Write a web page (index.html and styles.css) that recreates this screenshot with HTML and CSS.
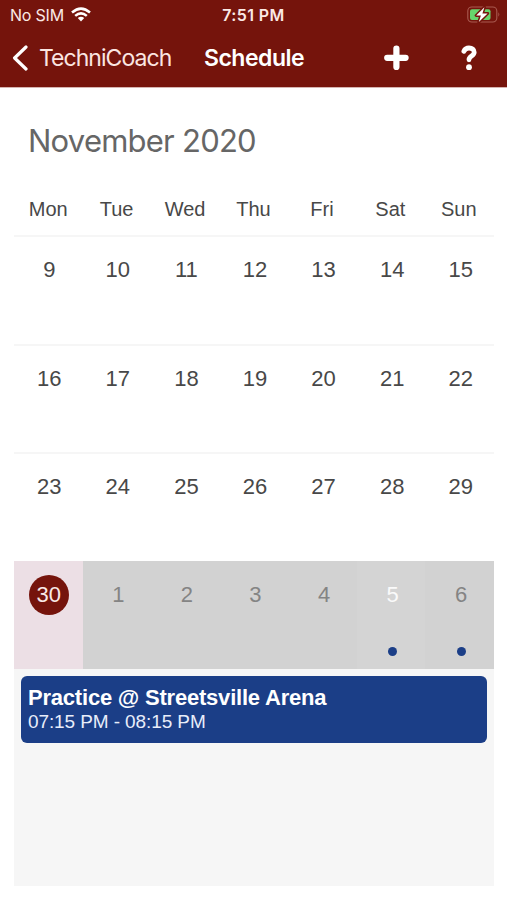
FILE: index.html
```html
<!DOCTYPE html>
<html lang="en">
<head>
<meta charset="utf-8">
<title>Schedule</title>
<link rel="stylesheet" href="styles.css">
</head>
<body>
<header class="header">
  <div class="status">
    <div class="carrier"><span class="sim">No SIM</span>
      <svg class="wifi" width="20" height="15" viewBox="0 0 20 15"><g fill="none" stroke="currentColor" stroke-width="2.5"><path d="M1 5.5Q10-2.3 19 5.5"/><path d="M4.2 8.9Q10 3.8 15.8 8.9"/></g><path fill="currentColor" d="M6.8 11Q10 8.3 13.2 11L10 14.5Z"/></svg>
    </div>
    <time class="clock">7:51 PM</time>
    <svg class="battery" width="33" height="17" viewBox="0 0 33 17"><rect x=".8" y="1" width="29" height="15" rx="4" fill="none" stroke="#a95a50" stroke-width="1.1"/><path d="M31.4 6.3Q33.2 8.5 31.4 10.7Z" fill="#a95a50"/><rect x="3" y="3.2" width="20.5" height="10.8" rx="2" fill="#66d66c"/><path d="M17.4 1.2 9.2 9.5h4.7L11.8 16 20.6 7.4h-5.2Z" fill="#fff" stroke="#75140c" stroke-width="3" stroke-linejoin="round" paint-order="stroke"/></svg>
  </div>
  <nav class="nav">
    <a class="back"><svg width="17" height="26" viewBox="0 0 17 26"><path d="M15 2 3.6 13 15 24" fill="none" stroke="currentColor" stroke-width="3.2" stroke-linecap="round" stroke-linejoin="round"/></svg><span class="back-text">TechniCoach</span></a>
    <h1 class="title">Schedule</h1>
    <svg class="plus" width="26" height="26" viewBox="0 0 26 26"><path d="M13.4 3.6v18.4M4.2 12.8h18.4" fill="none" stroke="currentColor" stroke-width="6.2" stroke-linecap="round"/></svg>
    <svg class="help" width="18" height="26" viewBox="0 0 18 26"><path d="M3.9 6.2C4.8 4.2 6.7 3 9 3c3.2 0 5.2 1.7 5.2 4.3 0 4-5.2 3.6-5.2 7.5" fill="none" stroke="currentColor" stroke-width="4.8" stroke-linecap="round" stroke-linejoin="round"/><circle cx="9" cy="22.2" r="2.9" fill="currentColor"/></svg>
  </nav>
</header>
<main class="calendar">
  <h2 class="month"><span class="month-text">November 2020</span></h2>
  <div class="weekdays"><span>Mon</span><span>Tue</span><span>Wed</span><span>Thu</span><span>Fri</span><span>Sat</span><span>Sun</span></div>
  <div class="week"><span>9</span><span>10</span><span>11</span><span>12</span><span>13</span><span>14</span><span>15</span></div>
  <div class="week"><span>16</span><span>17</span><span>18</span><span>19</span><span>20</span><span>21</span><span>22</span></div>
  <div class="week"><span>23</span><span>24</span><span>25</span><span>26</span><span>27</span><span>28</span><span>29</span></div>
  <div class="week next"><span class="selected"><b class="disc">30</b></span><span>1</span><span>2</span><span>3</span><span>4</span><span class="event today">5</span><span class="event">6</span></div>
  <section class="agenda">
    <article class="card"><h3 class="name"><span>Practice @ Streetsville Arena</span></h3><p class="time"><span>07:15 PM - 08:15 PM</span></p></article>
  </section>
</main>
</body>
</html>
```
FILE: styles.css
```css
* { box-sizing: border-box; }
body { margin: 0; background: #fff; color: #484848; font-family: "Liberation Sans", Arial, sans-serif; }
h1, h2, h3, p { margin: 0; }
svg { display: block; flex: none; }
.header { height: 88px; background: #75140c; color: #fff; font-family: Inter, sans-serif; border-bottom: 1px solid #d6b4b0; }
.status { height: 30px; display: grid; grid-template-columns: 1fr auto 1fr; align-items: center; padding: 0 7px 0 10px; font-size: 16px; color: #fbe9e5; }
.carrier { display: flex; align-items: center; gap: 7px; margin-top: -1px; }
.sim { letter-spacing: -.2px; }
.wifi { color: #fff; }
.clock { font-weight: 600; font-size: 16px; letter-spacing: .4px; margin: -1px 3px 0 0; }
.battery { justify-self: end; margin-top: -2px; }
.nav { height: 56px; display: flex; align-items: center; padding-left: 11px; }
.back { display: flex; align-items: center; gap: 11px; width: 193px; color: #fff; }
.back-text { font-size: 23px; letter-spacing: -.96px; color: #fbe5e1; }
.title { font-size: 23px; font-weight: 600; letter-spacing: -.5px; width: 179px; }
.plus { margin-right: 51px; }
.calendar { padding: 27px 13px 0 14px; }
.month { height: 83.5px; padding: 6px 0 0 14px; font: 400 31px/40px Inter, sans-serif; letter-spacing: -.76px; color: #666; }
.weekdays { height: 36.5px; display: grid; grid-template-columns: repeat(7, 1fr); text-align: center; font-size: 20px; line-height: 1; width: 479px; }
.week { height: 108.6px; display: grid; grid-template-columns: repeat(7, 1fr); border-top: 2px solid #f6f6f6; text-align: center; font-size: 22px; line-height: 66px; }
.week > span { padding-left: 2px; }
.next { border: 0; background: #d2d2d2; color: #848484; line-height: 68px; }
.next > span { padding-left: 3px; }
.week > .selected { background: #ecdfe5; padding-left: 1px; }
.disc { display: block; width: 40px; height: 40px; margin: 14px auto 0; border-radius: 50%; background: #75140c; color: #f8e9e7; font-weight: 400; line-height: 40px; }
.event::after { content: ""; display: block; width: 9px; height: 9px; margin: 18px auto 0; border-radius: 50%; background: #1b3e87; }
.today { color: #fafafa; background: #d4d4d4; }
.agenda { height: 217px; padding: 7px 7px 0; background: #f6f6f6; }
.card { height: 67px; padding: 10px 7px; border-radius: 6px; background: #1b3e87; color: #fff; }
.name { font-size: 22px; line-height: 24px; letter-spacing: -.21px; }
.time { font-size: 19px; line-height: 23px; letter-spacing: -.1px; color: #e8edfa; }
```
